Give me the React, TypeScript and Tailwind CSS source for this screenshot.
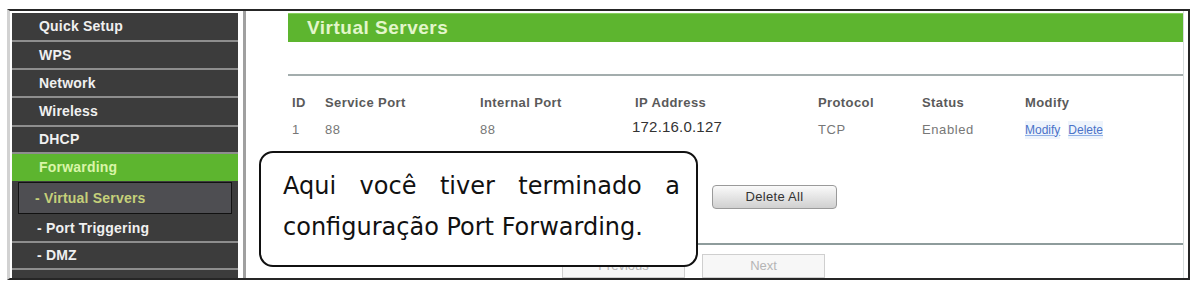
import React from "react";

type NavItem = {
  label: string;
  h: string;
  kind?: "active" | "current" | "sub";
};

const NAV: NavItem[] = [
  { label: "Quick Setup", h: "h-[27px]" },
  { label: "WPS", h: "h-[26px]" },
  { label: "Network", h: "h-[26px]" },
  { label: "Wireless", h: "h-[27px]" },
  { label: "DHCP", h: "h-[25px]" },
  { label: "Forwarding", h: "h-[27px]", kind: "active" },
  { label: "- Virtual Servers", h: "h-[34px]", kind: "current" },
  { label: "- Port Triggering", h: "h-[26px]", kind: "sub" },
  { label: "- DMZ", h: "h-[25px]", kind: "sub" },
];

function Sidebar() {
  return (
    <div className="ml-[2px] w-[226px] pt-[2px] flex flex-col text-[14px] font-bold tracking-[0.2px]">
      {NAV.map((n) => {
        if (n.kind === "active") {
          return (
            <div
              key={n.label}
              className={`${n.h} flex items-center bg-[#5db52f] pl-[27px] text-[#d9f5a8]`}
            >
              {n.label}
            </div>
          );
        }
        if (n.kind === "current") {
          return (
            <div key={n.label} className={`${n.h} bg-[#3c3c3c] px-[6px] py-[1px]`}>
              <div className="h-full flex items-center border-[1.5px] border-[#111] bg-[#4e4e52] pl-[16px] text-[#c5d07a]">
                {n.label}
              </div>
            </div>
          );
        }
        return (
          <div key={n.label} className="flex flex-col">
            <div
              className={`${n.h} flex items-center bg-[#3c3c3c] text-[#f0f0f0] ${
                n.kind === "sub" ? "pl-[25px]" : "pl-[27px]"
              }`}
            >
              {n.label}
            </div>
            <div className="h-[2px] bg-[#8e8e8e]" />
          </div>
        );
      })}
      <div className="flex-1 bg-[#3c3c3c]" />
    </div>
  );
}

function Main() {
  const cols = "grid grid-cols-[33px_155px_155px_183px_104px_103px_1fr] pl-[4px]";
  return (
    <div className="flex-1 flex">
      <div className="flex-1 pl-[42px] flex flex-col">
        <div className="mt-[2px] h-[29px] bg-[#5db52f] border-t border-[#86cf5c] flex items-center pl-[19px] text-[19px] font-bold tracking-[0.5px] text-[#e3f6cb]">
          Virtual Servers
        </div>
        <div className="mt-[32px] h-[2px] bg-[#a3adad]" />
        <div className={`${cols} mt-[17px] h-[16px] items-center text-[13px] font-bold tracking-[0.4px] text-[#5a5a5a]`}>
          <span>ID</span>
          <span>Service Port</span>
          <span>Internal Port</span>
          <span>IP Address</span>
          <span>Protocol</span>
          <span>Status</span>
          <span>Modify</span>
        </div>
        <div className={`${cols} mt-[11px] h-[16px] items-center text-[13px] tracking-[0.6px] text-[#777]`}>
          <span>1</span>
          <span>88</span>
          <span>88</span>
          <span className="-ml-[3px] -mt-[4px] text-[15px] tracking-[0.2px] text-[#333]">172.16.0.127</span>
          <span>TCP</span>
          <span>Enabled</span>
          <span className="flex gap-[8px] text-[12px] tracking-[0px] text-[#4a72c8]">
            <span className="underline decoration-[#8fb0e6] bg-[#eef4fc]">Modify</span>
            <span className="underline decoration-[#8fb0e6] bg-[#eef4fc]">Delete</span>
          </span>
        </div>
        <div className="mt-[49px] ml-[424px] w-[125px] h-[25px] rounded-[4px] border border-[#9a9a9a] bg-gradient-to-b from-[#fafafa] to-[#d0d0d0] flex items-center justify-center text-[13px] tracking-[0.3px] text-[#333]">
          Delete All
        </div>
        <div className="mt-[34px] h-[2px] bg-[#8e9c9c]" />
        <div className="mt-[9px] flex gap-[17px] pl-[274px]">
          <div className="w-[123px] h-[24px] border border-[#cfcfcf] bg-[#f7f7f7] flex items-center justify-center text-[13px] text-[#b5b5b5]">
            Previous
          </div>
          <div className="w-[123px] h-[24px] border border-[#cfcfcf] bg-[#f7f7f7] flex items-center justify-center text-[13px] text-[#b5b5b5]">
            Next
          </div>
        </div>
      </div>
      <div className="w-[5px] border-l border-[#d6dddd]" />
    </div>
  );
}

export default function App() {
  return (
    <div className="relative w-[1193px] h-[282px] bg-white pt-[9px] pl-[7px] font-['Liberation_Sans',Arial,sans-serif]">
      <div className="w-[1183px] h-[271px] flex border-t-2 border-b-2 border-r-2 border-[#262626] border-l-[3px] border-l-[#d2d2d2] overflow-hidden">
        <Sidebar />
        <div className="w-[5px]" />
        <div className="w-[3px] bg-[#a0a0a0]" />
        <Main />
      </div>

      <div className="absolute left-[259px] top-[151px] w-[439px] h-[116px] rounded-[14px] border-2 border-[#111] bg-white pl-[22px] pr-[16px] pt-[13px] font-['DejaVu_Sans',sans-serif] text-[24px] leading-[41px] text-[#111]">
        <div className="text-justify [text-align-last:justify]">Aqui você tiver terminado a</div>
        <div>configuração Port Forwarding.</div>
      </div>
    </div>
  );
}
